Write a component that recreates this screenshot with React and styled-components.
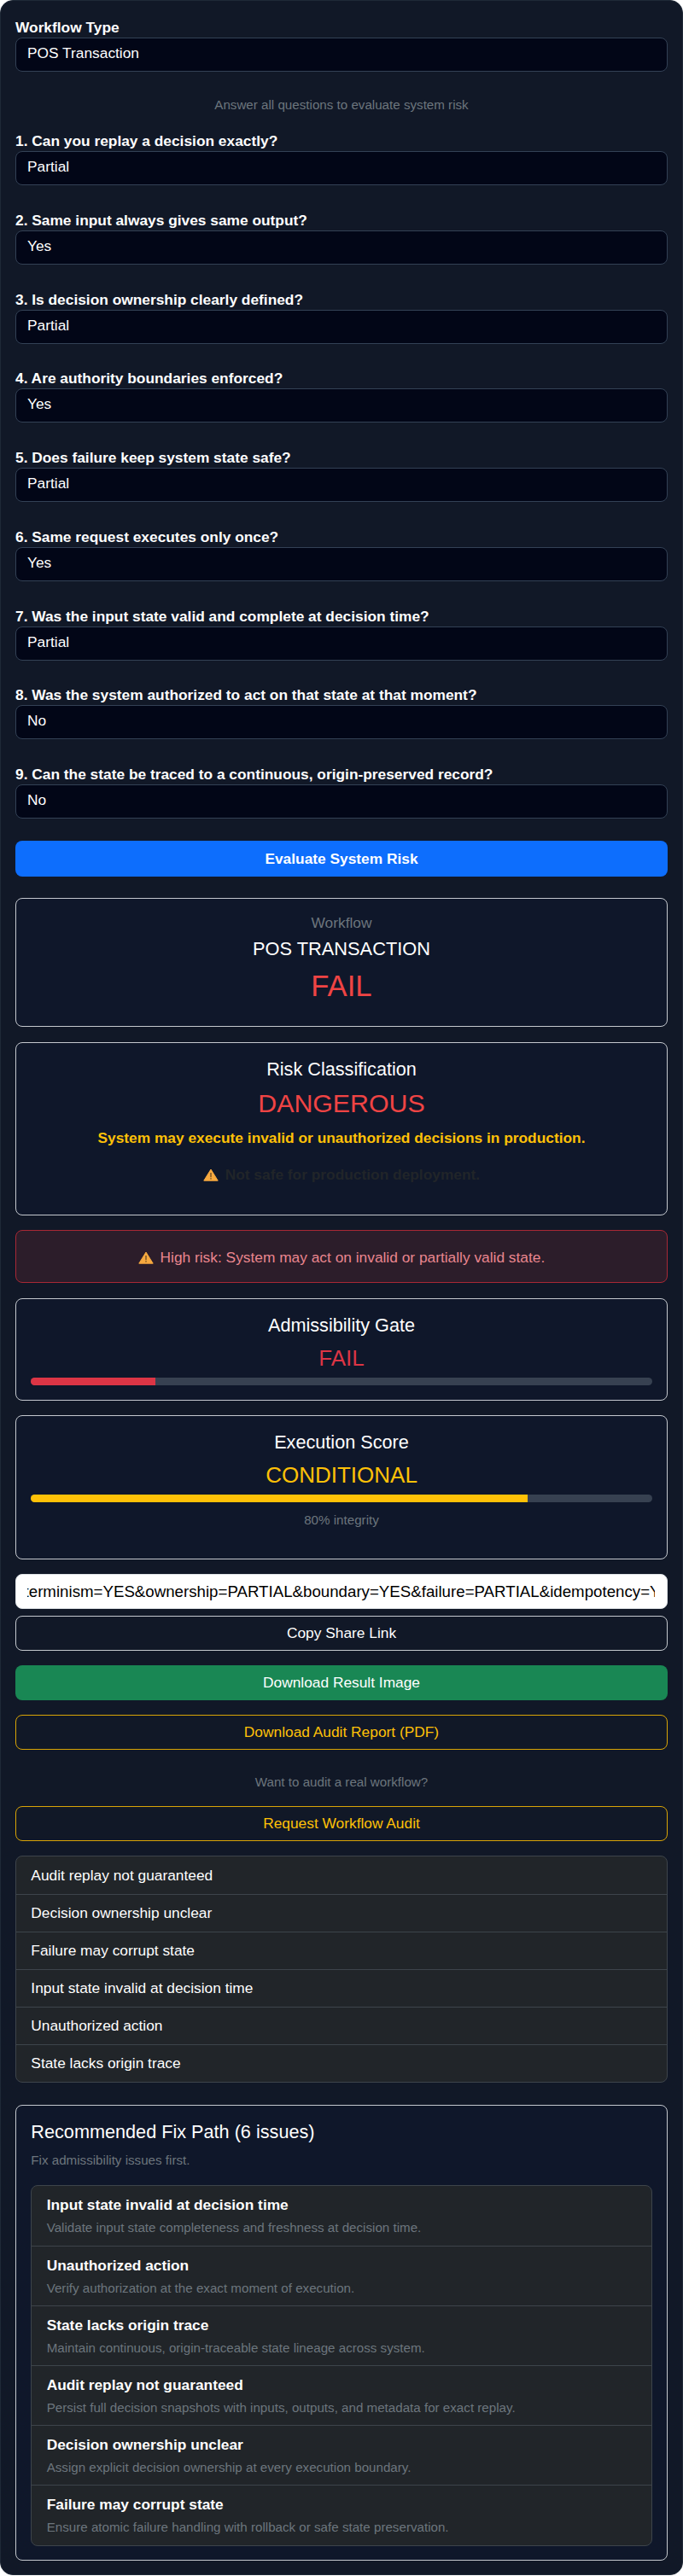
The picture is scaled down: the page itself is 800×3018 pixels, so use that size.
import styled, { createGlobalStyle } from "styled-components";

const GlobalStyle = createGlobalStyle`
  * {
    box-sizing: border-box;
  }

  body {
    margin: 0;
    background: #fff;
    font-family: "Liberation Sans", Arial, sans-serif;
    font-size: 17.33px;
    line-height: 1.5;
  }
`;

const questions = [
  ["1. Can you replay a decision exactly?", "Partial"],
  ["2. Same input always gives same output?", "Yes"],
  ["3. Is decision ownership clearly defined?", "Partial"],
  ["4. Are authority boundaries enforced?", "Yes"],
  ["5. Does failure keep system state safe?", "Partial"],
  ["6. Same request executes only once?", "Yes"],
  ["7. Was the input state valid and complete at decision time?", "Partial"],
  ["8. Was the system authorized to act on that state at that moment?", "No"],
  ["9. Can the state be traced to a continuous, origin-preserved record?", "No"],
];

const issues = [
  "Audit replay not guaranteed",
  "Decision ownership unclear",
  "Failure may corrupt state",
  "Input state invalid at decision time",
  "Unauthorized action",
  "State lacks origin trace",
];

const fixes = [
  ["Input state invalid at decision time", "Validate input state completeness and freshness at decision time."],
  ["Unauthorized action", "Verify authorization at the exact moment of execution."],
  ["State lacks origin trace", "Maintain continuous, origin-traceable state lineage across system."],
  ["Audit replay not guaranteed", "Persist full decision snapshots with inputs, outputs, and metadata for exact replay."],
  ["Decision ownership unclear", "Assign explicit decision ownership at every execution boundary."],
  ["Failure may corrupt state", "Ensure atomic failure handling with rollback or safe state preservation."],
];

const linkStart = "https://example.com/?workflow=POS&replay=PARTIAL&de";
const shareLink =
  linkStart + "terminism=YES&ownership=PARTIAL&boundary=YES&failure=PARTIAL&idempotency=YES&state=PARTIAL";

// the field in the screenshot is scrolled to the middle of the link
function scrollLink(el) {
  if (!el) return;
  const ctx = document.createElement("canvas").getContext("2d");
  ctx.font = '18.7px "Liberation Sans"';
  el.scrollLeft = Math.round(ctx.measureText(linkStart).width + 3);
}

function WarningIcon() {
  return (
    <WarnSvg viewBox="0 0 18 15" aria-hidden="true">
      <path d="M9 1 L17.2 14.2 L0.8 14.2 Z" fill="#f7a93f" stroke="#f7a93f" strokeLinejoin="round" />
      <rect x="8.4" y="5" width="1.2" height="5.2" fill="#5a4020" />
      <rect x="8.4" y="11.2" width="1.2" height="1.4" fill="#5a4020" />
    </WarnSvg>
  );
}

export default function App() {
  return (
    <>
      <GlobalStyle />
      <Shell>
        <Label>Workflow Type</Label>
        <Select>POS Transaction</Select>

        <Hint>Answer all questions to evaluate system risk</Hint>

        <Questions>
          {questions.map(([q, a]) => (
            <div key={q}>
              <Label>{q}</Label>
              <Select>{a}</Select>
            </div>
          ))}
        </Questions>

        <EvaluateButton>Evaluate System Risk</EvaluateButton>

        <ResultCard $h={151} $gap={25}>
          <Muted>Workflow</Muted>
          <WorkflowName>POS TRANSACTION</WorkflowName>
          <BigStatus>FAIL</BigStatus>
        </ResultCard>

        <ResultCard $h={203}>
          <CardTitle>Risk Classification</CardTitle>
          <MidStatus>DANGEROUS</MidStatus>
          <Consequence>System may execute invalid or unauthorized decisions in production.</Consequence>
          <NotSafe>
            <WarningIcon /> Not safe for production deployment.
          </NotSafe>
        </ResultCard>

        <RiskAlert>
          <WarningIcon /> High risk: System may act on invalid or partially valid state.
        </RiskAlert>

        <ResultCard $h={120}>
          <CardTitle>Admissibility Gate</CardTitle>
          <SmallStatus $color="#dc3545">FAIL</SmallStatus>
          <Track>
            <Fill $color="#dc3545" style={{ width: "20%" }} />
          </Track>
        </ResultCard>

        <ResultCard $h={169} $gap={17}>
          <CardTitle>Execution Score</CardTitle>
          <SmallStatus $color="#ffc107">CONDITIONAL</SmallStatus>
          <Track>
            <Fill $color="#ffc107" style={{ width: "80%" }} />
          </Track>
          <Integrity>80% integrity</Integrity>
        </ResultCard>

        <LinkInput readOnly value={shareLink} ref={scrollLink} />
        <CopyButton>Copy Share Link</CopyButton>
        <GreenButton>Download Result Image</GreenButton>
        <AmberButton>Download Audit Report (PDF)</AmberButton>
        <WantText>Want to audit a real workflow?</WantText>
        <AmberButton>Request Workflow Audit</AmberButton>

        <IssueList>
          {issues.map((t) => (
            <IssueItem key={t}>{t}</IssueItem>
          ))}
        </IssueList>

        <FixCard>
          <FixTitle>Recommended Fix Path (6 issues)</FixTitle>
          <FixHint>Fix admissibility issues first.</FixHint>
          <FixList>
            {fixes.map(([t, d]) => (
              <FixItem key={t}>
                <FixName>{t}</FixName>
                <FixDesc>{d}</FixDesc>
              </FixItem>
            ))}
          </FixList>
        </FixCard>
      </Shell>
    </>
  );
}

const Shell = styled.div`
  width: 800px;
  height: 3017px;
  padding: 19px 17px 0;
  background: #111827;
  border: 1px solid #1f2937;
  border-radius: 15px;
  color: #fff;
`;

const Questions = styled.div`
  display: flex;
  flex-direction: column;
  gap: 28.75px;
`;

const Label = styled.div`
  font-weight: 700;
  font-size: 17.33px;
  line-height: 24px;
  white-space: nowrap;
`;

const Select = styled.div`
  height: 40px;
  padding: 4px 13px;
  background: #020617;
  border: 1px solid #334155;
  border-radius: 8px;
  line-height: 26px;
  color: #fff;
`;

const Hint = styled.div`
  margin: 27px 0 18px;
  text-align: center;
  font-size: 15.17px;
  line-height: 24px;
  color: #6c757d;
`;

const EvaluateButton = styled.div`
  height: 42px;
  margin-top: 26px;
  background: #0d6efd;
  border-radius: 8px;
  font-weight: 700;
  text-align: center;
  line-height: 42px;
`;

const ResultCard = styled.div`
  height: ${(p) => p.$h}px;
  margin-top: ${(p) => p.$gap || 18}px;
  padding: 15px 17.33px;
  background: #0f172a;
  border: 1px solid #c4c8ce;
  border-radius: 8px;
  text-align: center;
`;

const Muted = styled.div`
  margin-bottom: 1px;
  color: #6c757d;
  line-height: 26px;
`;

const CardTitle = styled.div`
  margin-top: 3px;
  font-size: 21.67px;
  line-height: 26px;
`;

const WorkflowName = styled.div`
  margin-top: 3px;
  font-size: 21.8px;
  line-height: 30px;
`;

const BigStatus = styled.div`
  margin-top: 7px;
  font-size: 34.67px;
  line-height: 42px;
  color: #ef4444;
`;

const MidStatus = styled.div`
  margin-top: 9px;
  font-size: 30.33px;
  line-height: 36px;
  color: #ef4444;
`;

const Consequence = styled.div`
  margin-top: 10px;
  font-weight: 700;
  font-size: 17.33px;
  line-height: 24px;
  color: #ffc107;
`;

const NotSafe = styled.div`
  margin-top: 18px;
  font-weight: 700;
  line-height: 26px;
  color: #212529;
`;

const WarnSvg = styled.svg`
  display: inline-block;
  width: 18px;
  height: 15px;
  margin-right: 3px;
  vertical-align: -2px;
`;

const RiskAlert = styled.div`
  height: 62px;
  margin-top: 17px;
  background: #2c1d2a;
  border: 1px solid #a82835;
  border-radius: 8px;
  text-align: center;
  line-height: 62px;
  color: #ea868f;
`;

const SmallStatus = styled.div`
  margin-top: 9px;
  font-size: 26px;
  line-height: 32px;
  color: ${(p) => p.$color};
`;

const Track = styled.div`
  height: 9px;
  margin-top: 7px;
  overflow: hidden;
  background: #374151;
  border-radius: 6px;
`;

const Fill = styled.div`
  height: 100%;
  background: ${(p) => p.$color};
`;

const Integrity = styled.div`
  margin-top: 10px;
  font-size: 15.17px;
  line-height: 22px;
  color: #6c757d;
`;

const LinkInput = styled.input`
  display: block;
  width: 100%;
  height: 41px;
  margin-top: 17px;
  padding: 6px 14px 6px 13px;
  background: #fff;
  border: 1px solid #dee2e6;
  border-radius: 8px;
  font: 18.7px "Liberation Sans", Arial, sans-serif;
  color: #000;
  outline: none;
`;

const CopyButton = styled.div`
  height: 41px;
  margin-top: 8px;
  border: 1px solid #c4c8ce;
  border-radius: 8px;
  text-align: center;
  line-height: 39px;
`;

const GreenButton = styled.div`
  height: 41px;
  margin-top: 17px;
  background: #198754;
  border-radius: 8px;
  text-align: center;
  line-height: 41px;
`;

const AmberButton = styled.div`
  height: 41px;
  margin-top: 17px;
  border: 1px solid #d9a406;
  border-radius: 8px;
  text-align: center;
  line-height: 39px;
  color: #ffc107;
`;

const WantText = styled.div`
  margin-top: 27px;
  text-align: center;
  font-size: 15.17px;
  line-height: 22px;
  color: #6c757d;
`;

const IssueList = styled.div`
  margin-top: 17px;
  overflow: hidden;
  background: #212529;
  border: 1px solid #3d444b;
  border-radius: 8px;
`;

const IssueItem = styled.div`
  height: 44px;
  padding: 0 17.33px;
  border-top: 1px solid #3d444b;
  line-height: 43px;
  &:first-child {
    border-top: 0;
    line-height: 44px;
  }
`;

const FixCard = styled.div`
  height: 534px;
  margin-top: 26px;
  padding: 15px 17.33px;
  background: #0f172a;
  border: 1px solid #c4c8ce;
  border-radius: 8px;
`;

const FixTitle = styled.div`
  font-size: 21.67px;
  line-height: 32px;
`;

const FixHint = styled.div`
  margin-top: 6px;
  font-size: 15.17px;
  line-height: 22px;
  color: #6c757d;
`;

const FixList = styled.div`
  margin-top: 17.5px;
  overflow: hidden;
  background: #212529;
  border: 1px solid #3d444b;
  border-radius: 8px;
`;

const FixItem = styled.div`
  height: 70.2px;
  padding: 9px 17.33px;
  border-top: 1px solid #3d444b;
  &:first-child {
    border-top: 0;
  }
`;

const FixName = styled.div`
  font-weight: 700;
  line-height: 26px;
`;

const FixDesc = styled.div`
  margin-top: 3px;
  font-size: 15.17px;
  line-height: 22px;
  color: #6c757d;
`;
